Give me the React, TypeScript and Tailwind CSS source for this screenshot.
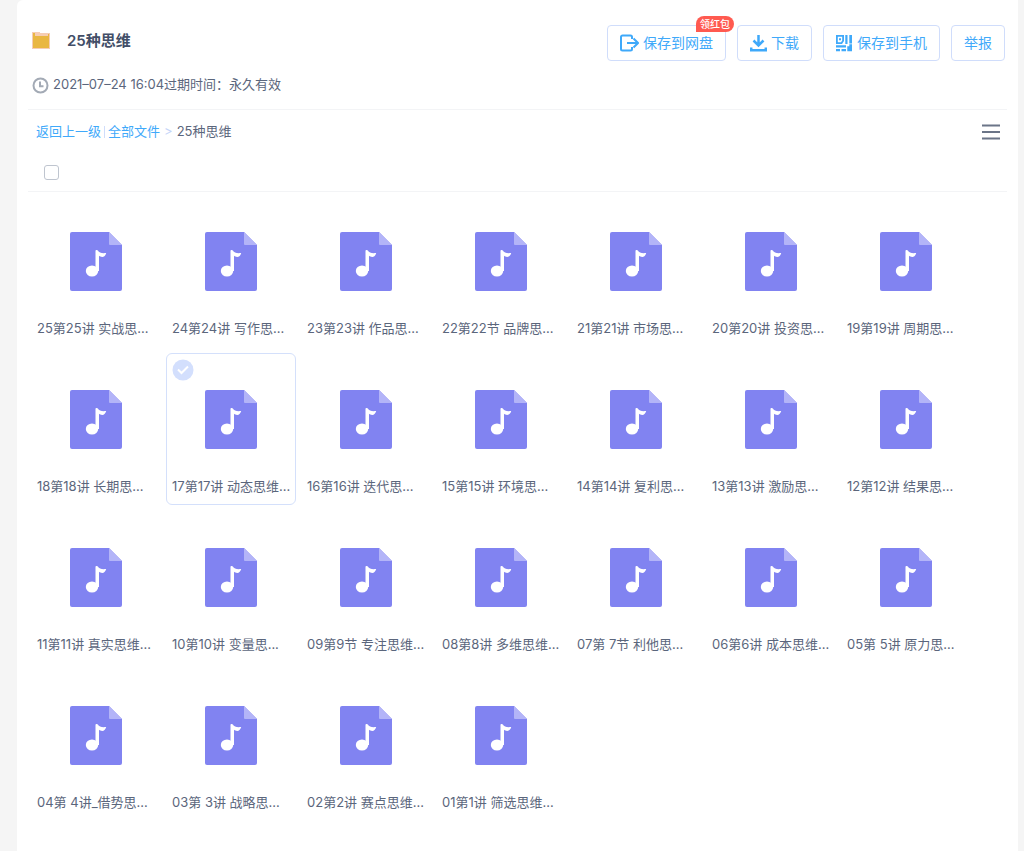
import type { ReactNode } from "react"

const files = [
  "25第25讲 实战思...",
  "24第24讲 写作思...",
  "23第23讲 作品思...",
  "22第22节 品牌思...",
  "21第21讲 市场思...",
  "20第20讲 投资思...",
  "19第19讲 周期思...",
  "18第18讲 长期思...",
  "17第17讲 动态思维...",
  "16第16讲 迭代思...",
  "15第15讲 环境思...",
  "14第14讲 复利思...",
  "13第13讲 激励思...",
  "12第12讲 结果思...",
  "11第11讲 真实思维...",
  "10第10讲 变量思...",
  "09第9节 专注思维...",
  "08第8讲 多维思维...",
  "07第 7节 利他思...",
  "06第6讲 成本思维...",
  "05第 5讲 原力思...",
  "04第 4讲_借势思...",
  "03第 3讲 战略思...",
  "02第2讲 赛点思维...",
  "01第1讲 筛选思维...",
]

const hovered = 8

function FolderIcon() {
  return (
    <svg width="18" height="18" viewBox="0 0 18 18" aria-hidden="true">
      <path d="M0 0h8v1h10v16H0z" fill="#f6cdb4" />
      <path d="M1 1h2v3h13V2h1v14H1z" fill="#e9b742" />
    </svg>
  )
}

function ClockIcon() {
  return (
    <svg width="17" height="17" viewBox="0 0 17 17" fill="none" stroke="#a3aab5" strokeWidth="2" aria-hidden="true">
      <circle cx="8.5" cy="8.5" r="7" />
      <path d="M8 4.5v4.8h3.5" />
    </svg>
  )
}

function SaveIcon() {
  return (
    <svg width="19" height="18" viewBox="0 0 19 18" fill="none" stroke="#3fa9fa" strokeWidth="2" aria-hidden="true">
      <path d="M12 5V3a1.500 1.500 0 0 0-1.500-1.500h-8A1.500 1.500 0 0 0 1 3v12a1.500 1.500 0 0 0 1.500 1.500h8A1.500 1.500 0 0 0 12 15v-2" />
      <path d="M7 9h10.500M13.500 4.500 18 9l-4.500 4.500" />
    </svg>
  )
}

function DownloadIcon() {
  return (
    <svg width="17" height="17" viewBox="0 0 17 17" fill="none" stroke="#3fa9fa" strokeWidth="2.5" aria-hidden="true">
      <path d="M8.500 0v10M3.500 5.500l5 5 5-5" />
      <path d="M1.200 12.500v2.800h14.600v-2.800" />
    </svg>
  )
}

function QrIcon() {
  return (
    <svg width="17" height="17" viewBox="0 0 17 17" fill="#3fa9fa" aria-hidden="true">
      <path fillRule="evenodd" d="M0 0h8v6L6 9H0zM1.800 1.800v5.400H5L6.200 5.500V1.800z" />
      <path d="M3 3.200h2v2H3zM9.300 0h2.200v9H9.300zM13.300 0H16v8.500h-2.700zM0 10.300h10v2.200H0zM0 14h4v2.200H0zM5.500 14H10v2.200H5.500zM11.300 11.300H16v4.900h-4.700zM13.300 9.300H16v2h-2.700z" />
    </svg>
  )
}

function MusicFileIcon() {
  return (
    <svg width="52" height="60" viewBox="0 0 52 60" aria-hidden="true">
      <path d="M2 0h37l13 13v44a2 2 0 0 1-2 2H2a2 2 0 0 1-2-2V2a2 2 0 0 1 2-2z" fill="#8183f1" />
      <path d="M39 0l13 13H40a1 1 0 0 1-1-1z" fill="#b3b4f8" />
      <ellipse cx="22" cy="39" rx="6.200" ry="5.500" fill="#fff" />
      <path
        d="M25.500 18.800c0-1.100 1.800-1.200 2.400-.2 1.200 2.200 4 2.900 8.300 2.400-.6 2.400-2 3.900-4 3.900-1.300 0-2.300-.5-3.200-1.200V39h-3.500z"
        fill="#fff"
      />
    </svg>
  )
}

function ActionButton({ children }: { children: ReactNode }) {
  return (
    <button className="relative flex h-9 items-center gap-1 whitespace-nowrap rounded border border-[#d0ddfb] bg-white px-3 text-sm text-[#3fa9fa]">
      {children}
    </button>
  )
}

function FileCard({ name, active }: { name: string; active: boolean }) {
  return (
    <li
      className={
        active
          ? "relative flex h-[152px] w-[130px] flex-col items-center rounded-md border border-[#d4e0fb] pt-9"
          : "relative flex h-[152px] w-[130px] flex-col items-center rounded-md border border-transparent pt-9"
      }
    >
      {active && (
        <svg className="absolute left-[5px] top-[5px]" width="22" height="22" viewBox="0 0 22 22" aria-hidden="true">
          <circle cx="11" cy="11" r="10.500" fill="#d3dffd" />
          <path d="M6 10.500l3.500 3.500 6.500-6.500" fill="none" stroke="#fff" strokeWidth="2" />
        </svg>
      )}
      <MusicFileIcon />
      <a href="#" className="mt-[26px] w-full whitespace-nowrap pl-[5px] leading-5">
        {name}
      </a>
    </li>
  )
}

export default function App() {
  return (
    <div className="min-h-screen bg-[#f5f5f5] pl-[17px] pr-[6px] font-['Inter','Noto_Sans_CJK_SC',sans-serif] text-[13px] text-[#5b667c]">
      <main className="min-h-screen rounded-tl-md bg-white px-[11px]">
        <header className="border-b border-[#f3f4f6] pb-[14px] pl-1 pt-[25px]">
          <div className="flex items-start justify-between">
            <div className="flex h-8 items-center gap-[17px]">
              <FolderIcon />
              <h1 className="text-[15px] font-semibold text-[#424e67]">25种思维</h1>
            </div>
            <div className="flex gap-[11px] pr-[2px]">
              <ActionButton>
                <SaveIcon />
                保存到网盘
                <span className="absolute -right-[9px] -top-[10px] rounded-full rounded-bl-none bg-[#ff5a50] px-1 text-[10px] font-medium leading-4 text-white">
                  领红包
                </span>
              </ActionButton>
              <ActionButton>
                <DownloadIcon />
                下载
              </ActionButton>
              <ActionButton>
                <QrIcon />
                保存到手机
              </ActionButton>
              <ActionButton>举报</ActionButton>
            </div>
          </div>
          <div className="mt-[14px] flex h-5 items-center gap-1">
            <ClockIcon />
            <span>2021–07–24 16:04过期时间：永久有效</span>
          </div>
        </header>

        <section className="border-b border-[#f3f4f6]">
          <div className="flex h-11 items-center justify-between pl-2 pr-[7px]">
            <nav className="flex items-center">
              <a href="#" className="text-[#3fa9fa]">返回上一级</a>
              <span className="mx-[3px] h-3 w-px bg-[#d0ddfb]" />
              <a href="#" className="text-[#3fa9fa]">全部文件</a>
              <span className="mx-1 text-[#c4d4f8]">&gt;</span>
              <span>25种思维</span>
            </nav>
            <button aria-label="列表模式">
              <svg width="18" height="16" viewBox="0 0 18 16" stroke="#6b7588" strokeWidth="2" aria-hidden="true">
                <path d="M0 1.500h18M0 8h18M0 14.500h18" />
              </svg>
            </button>
          </div>
          <div className="flex h-[37px] items-center pl-4">
            <input
              type="checkbox"
              aria-label="全选"
              className="size-[15px] appearance-none rounded-[3px] border border-[#bfc5cf] bg-white"
            />
          </div>
        </section>

        <ul className="flex flex-wrap gap-x-[5px] gap-y-[6px] pl-[3px] pt-[3px]">
          {files.map((name, i) => (
            <FileCard key={name} name={name} active={i === hovered} />
          ))}
        </ul>
      </main>
    </div>
  )
}
